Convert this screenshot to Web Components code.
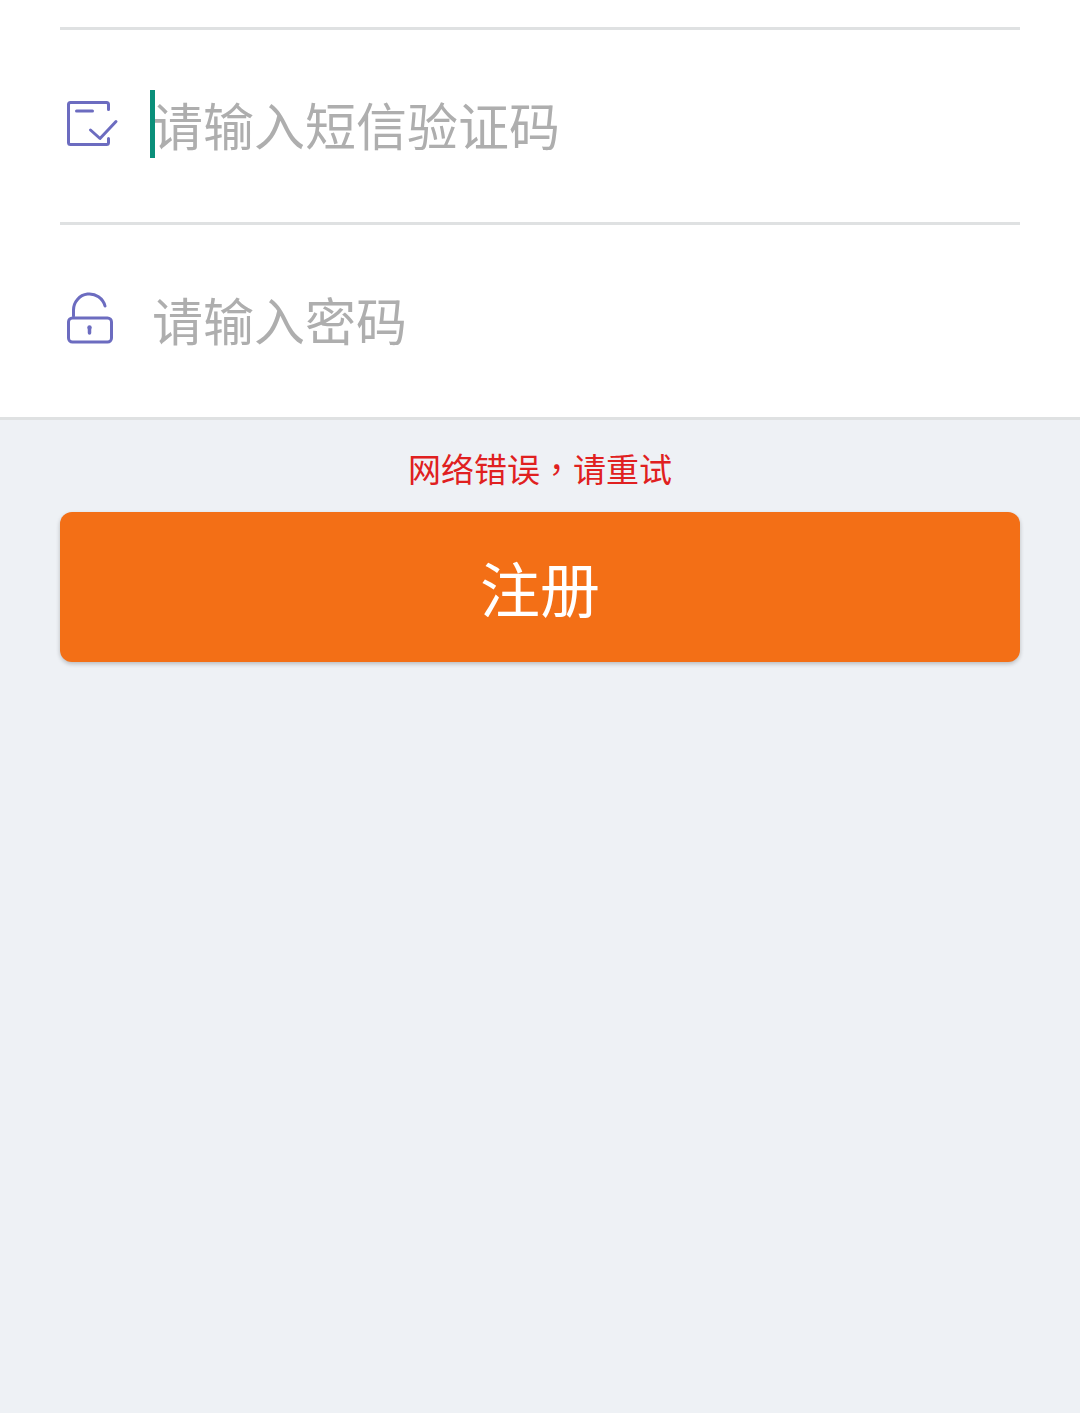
<!DOCTYPE html>
<html lang="zh-CN">
<head>
<meta charset="utf-8">
<title>注册</title>
<style>
  html, body {
    margin: 0;
    height: 100%;
    background: #eef1f5;
    font-family: "Noto Sans CJK SC", "Noto Sans", sans-serif;
  }
</style>
</head>
<body>
<register-page>
  <form-row slot="rows" placeholder="请输入短信验证码" focused>
    <svg slot="icon" width="54" height="54" viewBox="0 0 54 54" fill="none" stroke="#6c6cc0" stroke-width="3" stroke-linecap="round" stroke-linejoin="round">
      <path d="M42.5 12.5V7.5a2 2 0 0 0-2-2H4.500a2 2 0 0 0-2 2v38a2 2 0 0 0 2 2h36a2 2 0 0 0 2-2v-4"/>
      <path d="M10.500 14h16"/>
      <path d="M24.500 33l9.500 8.500 16-17"/>
    </svg>
  </form-row>
  <form-row slot="rows" placeholder="请输入密码">
    <svg slot="icon" width="54" height="54" viewBox="0 0 54 54" fill="none" stroke="#6c6cc0" stroke-width="3" stroke-linecap="round" stroke-linejoin="round">
      <rect x="2.500" y="26" width="43" height="24" rx="4"/>
      <path d="M7.500 24v-6a16 16 0 0 1 31.500-4"/>
      <path d="M23.500 41v-5" stroke-width="3.500"/>
      <circle cx="23.500" cy="35.500" r="2.200" fill="#6c6cc0" stroke="none"/>
    </svg>
  </form-row>
  <error-note slot="error">网络错误<span class="comma" lang="zh-TW" style="font-family:'Noto Sans CJK TC',sans-serif">，</span>请重试</error-note>
  <primary-button slot="action">注册</primary-button>
</register-page>

<script>
const pageTemplate = document.createElement("template");
pageTemplate.innerHTML = `
<style>
  :host {
    display: flex;
    flex-direction: column;
    min-height: 1413px;
    background: #eef1f5;
  }
  .form {
    background: #fff;
    padding: 27px 0 0;
    border-bottom: 3px solid #dfe1e2;
    display: flex;
    flex-direction: column;
  }
  .below {
    padding: 0 60px;
    display: flex;
    flex-direction: column;
  }
</style>
<div class="form"><slot name="rows"></slot></div>
<div class="below">
  <slot name="error"></slot>
  <slot name="action"></slot>
</div>
`;
class RegisterPage extends HTMLElement {
  constructor() {
    super();
    this.attachShadow({ mode: "open" }).appendChild(pageTemplate.content.cloneNode(true));
  }
}

const rowTemplate = document.createElement("template");
rowTemplate.innerHTML = `
<style>
  :host {
    display: block;
    margin: 0 60px;
    border-top: 3px solid #dfe1e2;
  }
  .row {
    height: 192px;
    display: flex;
    align-items: center;
  }
  .icon {
    flex: 0 0 90px;
    height: 54px;
    margin-top: -4px;
    padding-left: 6px;
    box-sizing: border-box;
  }
  .field {
    position: relative;
    font-size: 51px;
    line-height: 68px;
    color: #aeaeae;
    margin-top: -4px;
    white-space: nowrap;
    padding-left: 2px;
  }
  .caret {
    position: absolute;
    left: 0;
    top: 0;
    width: 5px;
    height: 68px;
    background: #0a8f7a;
    display: none;
  }
  :host([focused]) .caret { display: block; }
</style>
<div class="row">
  <div class="icon"><slot name="icon"></slot></div>
  <div class="field"><span class="text"></span><div class="caret"></div></div>
</div>
`;
class FormRow extends HTMLElement {
  constructor() {
    super();
    this.attachShadow({ mode: "open" }).appendChild(rowTemplate.content.cloneNode(true));
  }

  connectedCallback() {
    this.shadowRoot.querySelector(".text").textContent = this.getAttribute("placeholder");
  }
}

const errorTemplate = document.createElement("template");
errorTemplate.innerHTML = `
<style>
  :host {
    display: block;
    height: 92px;
    padding-top: 26px;
    box-sizing: border-box;
    text-align: center;
    font-size: 33px;
    line-height: 44px;
    color: #e02020;
  }
</style>
<slot></slot>
`;
class ErrorNote extends HTMLElement {
  constructor() {
    super();
    this.attachShadow({ mode: "open" }).appendChild(errorTemplate.content.cloneNode(true));
  }
}

const buttonTemplate = document.createElement("template");
buttonTemplate.innerHTML = `
<style>
  :host {
    display: flex;
    align-items: center;
    justify-content: center;
    height: 150px;
    border-radius: 12px;
    background: #f36f16;
    box-shadow: 0 2px 4px rgba(0, 0, 0, 0.22);
    color: #fff;
    font-size: 60px;
    line-height: 80px;
  }
</style>
<slot></slot>
`;
class PrimaryButton extends HTMLElement {
  constructor() {
    super();
    this.attachShadow({ mode: "open" }).appendChild(buttonTemplate.content.cloneNode(true));
  }
}

window.customElements.define("register-page", RegisterPage);
window.customElements.define("form-row", FormRow);
window.customElements.define("error-note", ErrorNote);
window.customElements.define("primary-button", PrimaryButton);
</script>
</body>
</html>
